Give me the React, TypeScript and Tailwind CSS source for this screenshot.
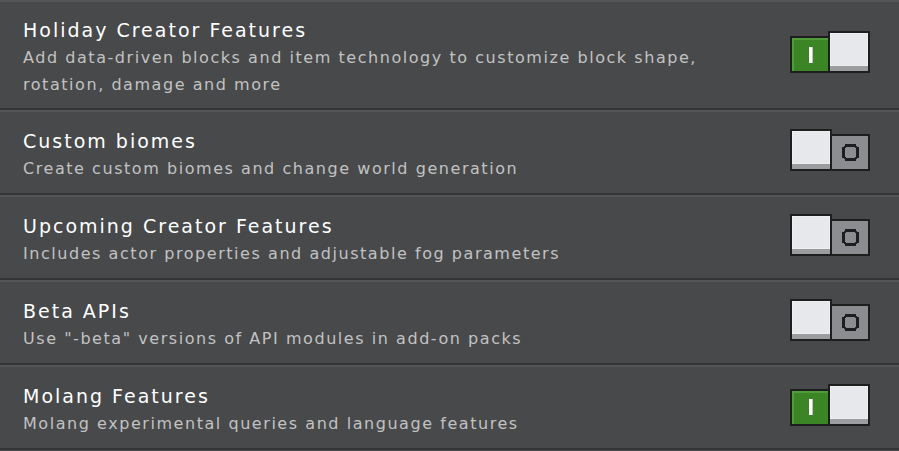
import React from "react";

type Item = { title: string; desc: string[]; on: boolean };

const items: Item[] = [
  {
    title: "Holiday Creator Features",
    desc: [
      "Add data-driven blocks and item technology to customize block shape,",
      "rotation, damage and more",
    ],
    on: true,
  },
  { title: "Custom biomes", desc: ["Create custom biomes and change world generation"], on: false },
  {
    title: "Upcoming Creator Features",
    desc: ["Includes actor properties and adjustable fog parameters"],
    on: false,
  },
  { title: "Beta APIs", desc: ['Use "-beta" versions of API modules in add-on packs'], on: false },
  { title: "Molang Features", desc: ["Molang experimental queries and language features"], on: true },
];

function Knob() {
  return (
    <div className="relative z-10 flex h-[42px] w-[42px] flex-col border-2 border-[#1e1e1f] bg-[#e6e8eb]">
      <div className="flex-1 border border-dotted border-[#f4f5f6]" />
      <div className="h-[5px] bg-[#9c9d9f]" />
    </div>
  );
}

function Toggle({ on }: { on: boolean }) {
  if (on) {
    return (
      <div className="mb-[6px] flex h-[42px] w-[80px] items-end">
        <div className="-mr-[2px] flex h-[37px] w-[40px] items-center justify-center border-2 border-[#1e1e1f] bg-[#3c8527] shadow-[inset_2px_2px_0_#4f9c3a]">
          <div className="h-[16px] w-[3px] bg-white shadow-[1px_0_0_#b8c7b3]" />
        </div>
        <Knob />
      </div>
    );
  }
  return (
    <div className="mb-[6px] flex h-[42px] w-[80px] items-end">
      <Knob />
      <div className="-ml-[2px] flex h-[37px] w-[40px] items-center justify-center border-2 border-[#1e1e1f] bg-[#8c8d90]">
        <svg width="17" height="17" viewBox="0 0 17 17" shapeRendering="crispEdges">
          <path
            fill="#1e1e1f"
            d="M3 0h11v3H3z M3 14h11v3H3z M0 3h3v11H0z M14 3h3v11h-3z M2 2h2v2H2z M13 2h2v2h-2z M2 13h2v2H2z M13 13h2v2h-2z"
          />
        </svg>
      </div>
    </div>
  );
}

export default function App() {
  return (
    <div
      className="flex h-[451px] w-[899px] flex-col overflow-hidden bg-[#48494a]"
      style={{ fontFamily: '"DejaVu Sans", sans-serif' }}
    >
      {items.map((it, i) => (
        <div
          key={i}
          className={`flex shrink-0 items-center justify-between border-t-2 border-b-2 border-t-[#545556] border-b-[#333435] pl-[23px] pr-[29px] ${
            i === 0 ? "h-[110px]" : "h-[85px]"
          }`}
        >
          <div className="flex flex-col pt-[3px]">
            <div className="text-[19px] leading-[28px] tracking-[2px] text-white">{it.title}</div>
            {it.desc.map((d, j) => (
              <div key={j} className="text-[16px] leading-[27px] tracking-[1.55px] text-[#c2c2c3]">
                {d}
              </div>
            ))}
          </div>
          <Toggle on={it.on} />
        </div>
      ))}
    </div>
  );
}
